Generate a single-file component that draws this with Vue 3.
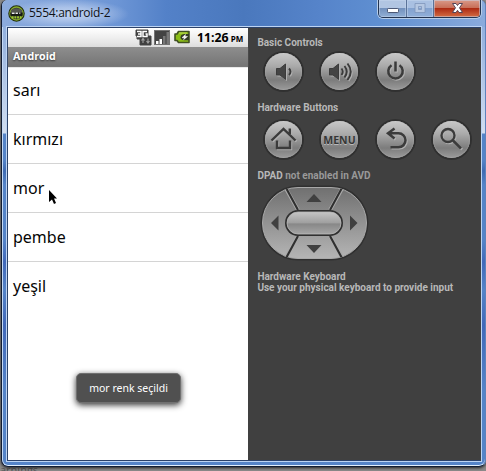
<script setup>
const colors = ['sarı', 'kırmızı', 'mor', 'pembe', 'yeşil']
const basic = ['down', 'up', 'power']
const hardware = ['home', 'menu', 'back', 'search']
</script>

<template>
  <div class="desktop">
    <div class="window">
      <header class="titlebar">
        <svg class="app-icon" width="17" height="17" viewBox="0 0 18 18">
          <circle cx="9" cy="9" r="8" fill="#202510" stroke="#22300c" stroke-width="1.5" />
          <circle cx="9" cy="9" r="6.9" fill="#303229" stroke="#87ab2d" stroke-width="1.4" />
          <path d="M3 5.5Q9 1.5 15 5.5V10H3Z" fill="#55564f" />
          <path d="M2.5 8H15.5V11.5H2.5Z" fill="#171914" />
          <path d="M4 8.7H7M8 8.7H10.5M12 8.7H13" stroke="#eee" stroke-width="1.4" />
          <path d="M4 13.2H14" stroke="#9dc832" stroke-width="2.4" stroke-dasharray="2 .8" />
        </svg>
        <h1 class="caption">5554:android-2</h1>
        <div class="controls">
          <button class="ctl min"><svg width="28" height="17" viewBox="0 0 28 17"><rect x="8.5" y="8.500" width="11" height="4" rx=".8" fill="#fff" stroke="#4c5875" /></svg></button>
          <button class="ctl max"><svg width="26" height="17" viewBox="0 0 26 17"><path d="M8 3.500H18V12.500H8ZM11.500 6.500V9.500H14.500V6.500Z" fill="#b5c7e2" fill-rule="evenodd" stroke="#7f96bb" stroke-width=".8" /></svg></button>
          <button class="ctl close"><svg width="46" height="17" viewBox="0 0 46 17"><path d="M18.500 3.500H22L23.500 5.500L25 3.500H28.500L25.500 7.800L28.500 12.500H25L23.500 10.300L22 12.500H18.500L21.500 7.800Z" fill="#fff" stroke="#554557" /></svg></button>
        </div>
      </header>

      <main class="client">
        <section class="phone">
          <div class="status">
            <svg class="status-icons" width="57" height="17" viewBox="0 0 57 17">
              <path d="M1 1H13V7H16V16H5V10H2V7H1Z" fill="#3f3f3f" stroke="#444" />
              <path d="M2 2.500H6V7.500H2M3 5H6M12 2.500H8V7.500H12V5H10.500" fill="none" stroke="#fff" stroke-width="1.5" />
              <path d="M8 14V10M6.500 11.500L8 9.500L9.500 11.500M13 9.500V13.500M11.500 12L13 14L14.500 12" fill="none" stroke="#a0a0a0" stroke-width="1.1" />
              <rect x="19.500" y="1.500" width="15" height="14" fill="#434343" stroke="#737373" />
              <path d="M21 12H23.500V15H21ZM24.500 10H27V15H24.500Z" fill="#fff" />
              <path d="M28 7H30.500V15H28ZM31.500 3H34V15H31.500Z" fill="#777" />
              <path d="M43.500 2.500H54V13.500H43.500L42 11.500H40V5H42Z" fill="#8bbd17" stroke="#405023" stroke-width="1.6" stroke-linejoin="round" />
              <path d="M44 4H52" stroke="#c0df57" />
              <path d="M54 5H49Q45.500 5.500 45.500 8.300Q45.500 11 49 11.200H54Z" fill="#353d26" />
              <path d="M50.500 5.500L47 8.700H49.500L48.500 10.700L52.500 7.500H50Z" fill="#fff" stroke="#fff" stroke-width=".5" />
            </svg>
            <span class="clock">11:26</span><span class="pm">PM</span>
          </div>
          <div class="app-title"><span>Android</span></div>
          <ul class="list">
            <li v-for="c in colors" :key="c"><span>{{ c }}</span></li>
          </ul>
          <div class="toast"><span>mor renk seçildi</span></div>
          <svg class="cursor" width="9" height="16" viewBox="0 0 9 16"><path d="M0 0L8 8.500H5L7 13L5 14L3 9.500L0 12Z" fill="#000" /></svg>
        </section>

        <aside class="panel">
          <h2 class="label"><span>Basic Controls</span></h2>
          <div class="row basic-row">
            <button v-for="b in basic" :key="b" class="round">
              <svg v-if="b === 'power'" class="glyph" viewBox="0 0 37 37">
                <path d="M14.500 12.300A7.200 7.200 0 1 0 22.500 12.300M18.500 8.500V18.500" fill="none" stroke="#3b3b3b" stroke-width="2.500" />
              </svg>
              <svg v-else class="glyph" viewBox="0 0 37 37">
                <g v-if="b === 'down'" fill="none" stroke="#3b3b3b" stroke-width="1.900">
                  <path d="M11.500 15.500H15L20.500 11V26.500L15 22H11.500Z" fill="#444" stroke-width="1" />
                  <path d="M24 15.500Q27 18.700 24 22" />
                </g>
                <g v-else fill="none" stroke="#3b3b3b" stroke-width="1.900">
                  <path d="M8.500 15.500H12L17.500 11V26.500L12 22H8.500Z" fill="#444" stroke-width="1" />
                  <path d="M20.500 15.500Q23 18.700 20.500 22M23.500 13Q28 18.700 23.500 24.500M26.500 10.500Q33 18.700 26.500 27" />
                </g>
              </svg>
            </button>
          </div>
          <h2 class="label"><span>Hardware Buttons</span></h2>
          <div class="row hardware-row">
            <button v-for="b in hardware" :key="b" class="round">
              <span v-if="b === 'menu'" class="menu">MENU</span>
              <svg v-else class="glyph" viewBox="0 0 37 37" fill="none" stroke="#3b3b3b">
                <path v-if="b === 'home'" d="M6.500 19.500L18.500 8L30.500 19.500M24.800 13V7.500M12 19.500V27H25V19.500" stroke-width="2.400" />
                <path v-else-if="b === 'back'" d="M17.500 7.500L11 12.200L17.500 17.500M11.500 12.300H21.500A7 7 0 0 1 21.500 26.300H13.500" stroke-width="2.500" />
                <g v-else><circle cx="15" cy="14.500" r="6.500" stroke-width="2.300" /><path d="M20 19.500L28 27.500" stroke-width="2.700" /></g>
              </svg>
            </button>
          </div>
          <h2 class="label"><span>DPAD <em>not enabled in AVD</em></span></h2>
          <svg class="dpad" width="109" height="76" viewBox="0 0 109 76">
            <defs>
              <linearGradient id="pad" x2="0" y2="1"><stop stop-color="#707070" /><stop offset="1" stop-color="#b5b5b5" /></linearGradient>
              <linearGradient id="ok" x2="0" y2="1"><stop stop-color="#c5c5c5" /><stop offset=".48" stop-color="#a0a0a0" /><stop offset=".55" stop-color="#888" /><stop offset="1" stop-color="#a5a5a5" /></linearGradient>
              <clipPath id="pad-clip"><rect x="2" y="2" width="105" height="72" rx="36" /></clipPath>
            </defs>
            <rect x=".5" y=".5" width="108" height="75" rx="37.500" fill="#303030" />
            <rect x="2.500" y="2.500" width="104" height="71" rx="35.500" fill="url(#pad)" stroke="#a9a9a9" />
            <g clip-path="url(#pad-clip)">
              <path d="M25 2L38 25M83 2L70 25M25 74L38 51M83 74L70 51" stroke="#aaa" stroke-width="3.600" />
              <path d="M25 1L38 25M83 1L70 25M25 75L38 51M83 75L70 51" stroke="#303030" stroke-width="2.100" />
            </g>
            <rect x="25" y="25" width="58" height="26" rx="13" fill="#303030" />
            <rect x="27" y="27" width="54" height="22" rx="11" fill="url(#ok)" stroke="#bababa" stroke-width=".8" />
            <path d="M46.500 17L54 9L61.500 17ZM46.500 60H61.500L54 68ZM18.500 30.500V45.500L11 38ZM90 30.500V45.500L97.500 38Z" fill="#404040" />
          </svg>
          <div class="keyboard label">
            <p><span>Hardware Keyboard</span></p>
            <p><span>Use your physical keyboard to provide input</span></p>
          </div>
        </aside>
      </main>
    </div>
    <div class="behind">arnings</div>
  </div>
</template>

<style>
body { overflow: hidden; }
</style>

<style scoped>
* { box-sizing: border-box; margin: 0; padding: 0; }
.desktop { position: relative; width: 486px; height: 471px; background: #8b8a8a; overflow: hidden; }
.window {
  position: relative; z-index: 1; width: 485px; height: 467px; margin-left: 1px;
  border: 1px solid #111c32; border-top: 0; border-right-color: #5c83bd; border-radius: 6px 6px 7px 7px;
  box-shadow: inset 1px 0 #c5daf5, inset 0 -1px #e2effc, 0 1px 3px #222;
  background: linear-gradient(#84a7dd 0, #9bb6df 45px, #d2def0 133px, #5584c8 134px, #5584c8 160px, #3f6bb2 171px, #5584c8 185px, #5584c8 240px, #4168b9 262px, #5584c8 290px, #4168b9 325px, #5584c8 390px, #5584c8 100%);
  padding: 0 4px 6px 5px;
}
.titlebar {
  display: flex; align-items: flex-start; height: 27px; margin: 0 -4px 0 -5px; padding-left: 6px;
  border-radius: 6px 6px 0 0;
  background: radial-gradient(ellipse 62px 15px at 65px 14px, #c0d3f0, #a9c1e8 45%, transparent), linear-gradient(90deg, #8cabdd, #6c95d5 24%, #5381c8 34%, #4a78bd 50%, #5684ca 66%, #5f8fd1 78%, #8aabdc);
}
.app-icon { margin: 5px 0 0; flex: none; }
.caption { font: 12px/18px "Open Sans", sans-serif; color: #101318; margin: 4px 0 0 4px; white-space: nowrap; letter-spacing: -.28px; }
.controls { display: flex; margin: 0 4px 0 auto; height: 18px; border: 1px solid #243552; border-top: 0; border-radius: 0 0 5px 5px; box-shadow: 0 0 0 1px #b8cee9; overflow: hidden; }
.ctl { border: 0; border-right: 1px solid #5b7399; height: 17px; background: linear-gradient(#b1c5e2 0 48%, #7391bd 50%, #91afd5); box-shadow: inset 0 0 0 1px #c7d8ee80; }
.ctl svg { display: block; }
.min { width: 28px; } .max { width: 27px; background: linear-gradient(#a9c0e2 0 48%, #83a2cf 50%, #91afd9); }
.close { width: 46px; border-right: 0; background: linear-gradient(#d99a89 0, #c76c55 48%, #ad2b13 50%, #d46d43); }
.client { display: flex; width: 474px; height: 434px; border: 1px solid #2c4269; border-right-color: #404040; box-shadow: 0 0 0 1px #bdd4f3; background: #404040; }
.phone { position: relative; width: 240px; height: 432px; background: #fff; flex: none; }
.status { height: 19px; display: flex; align-items: flex-start; padding-left: 127px; background: linear-gradient(#fff, #e5e5e5 80%, #dcdcdc); }
.status-icons { margin-top: 1px; flex: none; }
.clock { font: bold 12.3px/19px "Open Sans", sans-serif; margin-left: 5px; }
.pm { font: bold 8px/22px "Open Sans", sans-serif; margin-left: 2px; letter-spacing: .1px; }
.app-title { height: 19px; padding-left: 5px; font: bold 10.7px/18px "Open Sans", sans-serif; color: #fff; text-shadow: 0 1px 2px #333; background: linear-gradient(#8e8e8e, #757575); box-shadow: 0 1px 1px #777; }
.list { list-style: none; }
.list li { height: 49px; border-bottom: 1px solid #d4d4d4; padding-left: 5px; font: 16px/49px "Noto Sans", sans-serif; color: #050505; }
.list li:last-child { border-bottom-color: transparent; }
.toast { position: absolute; left: 68px; top: 345px; width: 105px; height: 30px; border: 1px solid #707070; border-radius: 5px; background: #505050; color: #fff; font: 10.5px/29px "Noto Sans", sans-serif; text-align: center; white-space: nowrap; box-shadow: 0 2px 6px #333; }
.cursor { position: absolute; left: 41px; top: 162px; }
.panel { flex: 1; min-width: 0; background: #404040; padding: 9px 0 0 9.4px; }
.label { height: 12px; font: bold 10px/12px Roboto, sans-serif; color: #b8b8b8; white-space: nowrap; }
.label em { color: #999; font-style: normal; }
.row { display: flex; gap: 19px; padding-left: 7.6px; }
.basic-row { margin-top: 4px; height: 49px; }
.hardware-row { margin-top: 7px; height: 49px; }
.round { position: relative; width: 37px; height: 37px; flex: none; border: 0; border-radius: 50%; background: linear-gradient(#c8c8c8, #aaa 35%, #7c7c7c 73%, #9b9b9b); box-shadow: 0 0 0 2px #303030, inset 0 0 1px #ddd; display: flex; align-items: center; justify-content: center; }
.glyph { width: 37px; height: 37px; filter: drop-shadow(1px 1px 0 #b0b0b0); flex: none; }
.menu { font: bold 10.5px/14px "Open Sans", sans-serif; color: #363636; text-shadow: 0 1px #bbb; padding-top: 1px; }
.dpad { display: block; margin: 3px 0 0 2.600px; }
.keyboard { margin-top: 10px; height: 24px; line-height: 11px; }
.behind { position: absolute; left: 0; top: 463px; height: 8px; overflow: hidden; color: #555; font: 11px/13px "Open Sans", sans-serif; }
</style>
